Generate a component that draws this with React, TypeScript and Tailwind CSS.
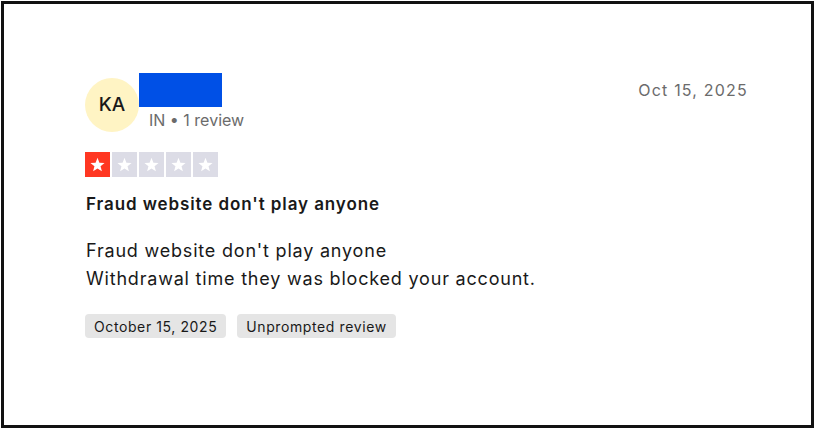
import React from "react";

function Star({ filled }: { filled: boolean }) {
  return (
    <div className={`w-[25px] h-[25px] flex items-center justify-center ${filled ? "bg-[#ff3722]" : "bg-[#dcdce6]"}`}>
      <svg width="17" height="17" viewBox="0 0 24 24">
        <path d="M12 2.5l2.7 6.9 7.3.4-5.7 4.6 1.9 7.1L12 17.5l-6.2 4 1.9-7.1L2 9.8l7.3-.4z" fill="#fff" />
      </svg>
    </div>
  );
}

export default function App() {
  return (
    <div className="w-[814px] h-[428px] bg-white pl-[1px] pt-[1px]" style={{ fontFamily: "Inter, 'Noto Sans', sans-serif" }}>
      <div className="w-[813px] h-[427px] border-[3px] border-[#111] bg-white pt-[69px] pl-[81px] pr-[63px]">
        <div className="flex justify-between">
          <div className="flex items-start">
            <div className="w-[54px] h-[54px] rounded-full bg-[#fff4c4] flex items-center justify-center mt-[5px] text-[19px] text-[#191919] font-medium">
              KA
            </div>
            <div className="flex flex-col">
              <div className="w-[83px] h-[34px] bg-[#0050e6]" />
              <div className="ml-[10px] mt-[3px] text-[16px] text-[#6b6b6b] leading-[20px]">IN • 1 review</div>
            </div>
          </div>
          <div className="text-[16px] text-[#6b6b6b] mt-[5px] tracking-[1.2px]">Oct 15, 2025</div>
        </div>
        <div className="flex gap-[2px] mt-[20px]">
          <Star filled />
          <Star filled={false} />
          <Star filled={false} />
          <Star filled={false} />
          <Star filled={false} />
        </div>
        <div className="mt-[16px] ml-[1px] text-[17px] font-semibold text-[#191919] leading-[22px] tracking-[0.9px]">
          Fraud website don't play anyone
        </div>
        <div className="mt-[22px] ml-[1px] text-[18px] text-[#191919] leading-[28px] tracking-[0.8px]">
          <div>Fraud website don't play anyone</div>
          <div>Withdrawal time they was blocked your account.</div>
        </div>
        <div className="flex gap-[11px] mt-[21px]">
          <div className="h-[24px] px-[9px] rounded-[4px] bg-[#e5e5e5] text-[14px] text-[#191919] flex items-center tracking-[0.6px]">October 15, 2025</div>
          <div className="h-[24px] px-[9px] rounded-[4px] bg-[#e5e5e5] text-[14px] text-[#191919] flex items-center tracking-[0.6px]">Unprompted review</div>
        </div>
      </div>
    </div>
  );
}
